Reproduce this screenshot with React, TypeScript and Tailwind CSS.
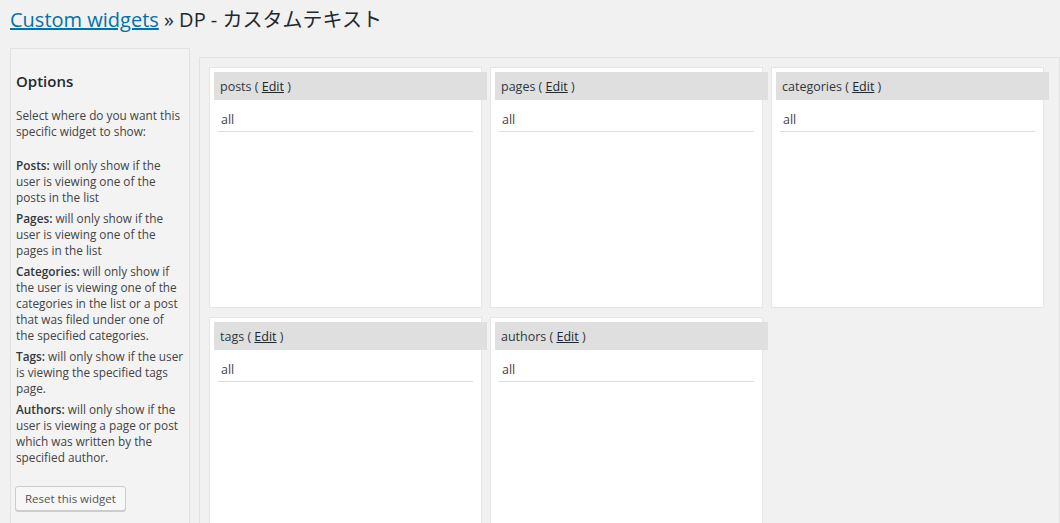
import React from 'react';

const font = { fontFamily: '"Open Sans", "Noto Sans CJK JP", sans-serif' };

const boxes = ['posts', 'pages', 'categories', 'tags', 'authors'];

function RuleBox({ name }: { name: string }) {
  return (
    <div className="w-[273px] h-[241px] bg-white border border-[#e5e5e5] shrink-0">
      <div className="w-[273px] ml-[4px] mt-[4px] h-[28px] bg-[#dfdfdf] flex items-center pl-[6px] pt-[3px] text-[12.5px] text-[#32373c]">
        {name} (&nbsp;<a href="#" className="underline text-[#23282d]">Edit</a>&nbsp;)
      </div>
      <div className="mx-[8px] mt-[4px] h-[28px] border-b border-[#dddddd] pt-[8px] leading-[16px] pl-[3px] text-[12.5px] text-[#444]">
        all
      </div>
    </div>
  );
}

export default function App() {
  return (
    <div className="w-[1060px] h-[523px] overflow-hidden bg-[#f1f1f1] text-[#444]" style={font}>
      <h1 className="pl-[10px] pt-[4px] h-[48px] text-[20px] leading-[32px] text-[#23282d]">
        <a href="#" className="text-[#0073aa] underline">Custom widgets</a> » DP - カスタムテキスト
      </h1>
      <div className="flex items-start">
        <div className="ml-[10px] w-[180px] h-[600px] border border-[#e2e2e2] bg-[#f3f3f3] pl-[5px] pr-[5px] pt-[22px] text-[11.8px] leading-[16px] text-[#444]">
          <h2 className="text-[15px] font-semibold text-[#23282d] leading-[20px] mb-[16px]">Options</h2>
          <p className="mb-[18px]">Select where do you want this specific widget to show:</p>
          <p className="mb-[5px]"><b className="font-semibold text-[#32373c]">Posts:</b> will only show if the user is viewing one of the posts in the list</p>
          <p className="mb-[5px]"><b className="font-semibold text-[#32373c]">Pages:</b> will only show if the user is viewing one of the pages in the list</p>
          <p className="mb-[5px]"><b className="font-semibold text-[#32373c]">Categories:</b> will only show if the user is viewing one of the categories in the list or a post that was filed under one of the specified categories.</p>
          <p className="mb-[5px]"><b className="font-semibold text-[#32373c]">Tags:</b> will only show if the user is viewing the specified tags page.</p>
          <p><b className="font-semibold text-[#32373c]">Authors:</b> will only show if the user is viewing a page or post which was written by the specified author.</p>
          <button className="mt-[21px] -ml-[1px] h-[25px] px-[9px] border border-[#cccccc] bg-[#f7f7f7] rounded-[3px] shadow-[0_1px_0_#cccccc] text-[11.5px] text-[#555]">
            Reset this widget
          </button>
        </div>
        <div className="ml-[9px] mt-[9px] flex-1 h-[600px] border border-[#e2e2e2] bg-[#f1f1f1] pl-[9px] pt-[9px]">
          <div className="flex flex-wrap gap-x-[8px] gap-y-[9px] w-[840px]">
            {boxes.map((b) => (
              <RuleBox key={b} name={b} />
            ))}
          </div>
        </div>
      </div>
    </div>
  );
}
